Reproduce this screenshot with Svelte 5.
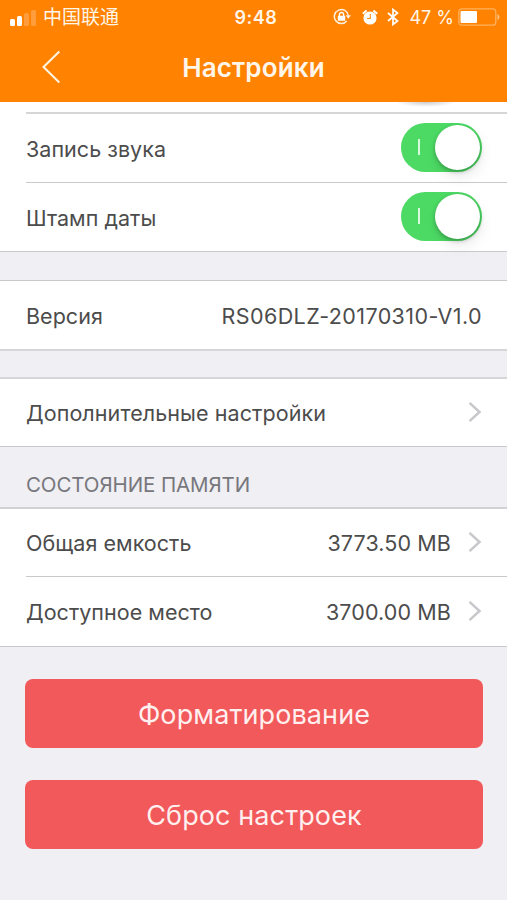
<script>
	let toggles = [
		{ id: 'sound', label: 'Запись звука', on: true },
		{ id: 'date', label: 'Штамп даты', on: true }
	];

	const memory = [
		{ label: 'Общая емкость', value: '3773.50 MB' },
		{ label: 'Доступное место', value: '3700.00 MB' }
	];

	const actions = ['Форматирование', 'Сброс настроек'];
	const bars = [7, 10, 13, 16];
</script>

{#snippet chevron()}
	<svg class="chevron" width="14" height="22" viewBox="0 0 14 22">
		<path d="M1.5 1.8 11.5 11 1.5 20.2" fill="none" stroke="#c7c7cc" stroke-width="2.5" />
	</svg>
{/snippet}

<div class="screen">
	<header>
		<div class="status">
			<div class="carrier">
				<div class="signal">
					{#each bars as height, i}
						<span class:weak={i > 1} style="height: {height}px"></span>
					{/each}
				</div>
				<span class="operator">中国联通</span>
			</div>
			<time>9:48</time>
			<div class="indicators">
				<svg class="lock" width="18" height="18" viewBox="0 0 18 18">
					<path d="M13.8 13A7 7 0 1 1 15.3 7.5" fill="none" stroke="#ffefdc" stroke-width="1.5" />
					<path d="M12.600 7.300h5.400l-2.700 3.500z" fill="#ffefdc" />
					<rect x="4.800" y="7.800" width="7.400" height="5" rx=".6" fill="#fff" />
					<path d="M6.400 8V6.600a2.100 2.100 0 0 1 4.200 0V8" fill="none" stroke="#fff" stroke-width="1.400" />
				</svg>
				<svg class="alarm" width="16" height="17" viewBox="0 0 16 17">
					<circle cx="8" cy="9" r="6.600" fill="#fff" />
					<path d="M8.300 5v4.500H5" fill="none" stroke="#ff8f1c" stroke-width="1.100" />
					<path d="M.8 4.700 4.600 1.400M15.200 4.700 11.400 1.400" stroke="#fff" stroke-width="2" />
				</svg>
				<svg class="bluetooth" width="12" height="18" viewBox="0 0 12 18">
					<path d="m1 5 9.500 8L6 16.500V1.500L10.500 5 1 13" fill="none" stroke="#fff" stroke-width="1.700" />
				</svg>
				<span class="percent">47 %</span>
				<svg class="battery" width="42" height="18" viewBox="0 0 42 18">
					<rect x=".8" y=".8" width="37" height="16.400" rx="3" fill="none" stroke="#ffb15f" stroke-width="1.300" />
					<rect x="2.500" y="3" width="16.500" height="12" rx="1" fill="#fff" />
					<path d="M39.500 6c2.500 1 2.500 5 0 6z" fill="#ffc488" />
				</svg>
			</div>
		</div>
		<nav>
			<svg width="20" height="34" viewBox="0 0 20 34">
				<path d="M18.300 1.500 2.500 17l15.800 15.500" fill="none" stroke="#fff3e2" stroke-width="2.100" />
			</svg>
			<h1>Настройки</h1>
		</nav>
	</header>

	<main>
		<section class="switches">
			<div class="cut"><i></i></div>
			{#each toggles as toggle (toggle.id)}
				<label class="row">
					<span>{toggle.label}</span>
					<input type="checkbox" bind:checked={toggle.on} />
					<b class="switch"></b>
				</label>
			{/each}
		</section>

		<section class="version">
			<div class="row">
				<span>Версия</span>
				<span class="value code">RS06DLZ-20170310-V1.0</span>
			</div>
		</section>

		<section class="more">
			<div class="row">
				<span class="long">Дополнительные настройки</span>
				{@render chevron()}
			</div>
		</section>

		<h2>СОСТОЯНИЕ ПАМЯТИ</h2>
		<section class="memory">
			{#each memory as item}
				<div class="row">
					<span>{item.label}</span>
					<span class="value">{item.value}</span>
					{@render chevron()}
				</div>
			{/each}
		</section>

		<div class="actions">
			{#each actions as action}
				<button type="button">{action}</button>
			{/each}
		</div>
	</main>
</div>

<style>
	:global(body) {
		margin: 0;
		background: #efeff4;
	}
	.screen {
		width: 507px;
		height: 900px;
		overflow: hidden;
		background: #efeff4;
		color: #4c4c4c;
		font-family: Inter, 'Noto Sans CJK SC', sans-serif;
		font-size: 21.5px;
		font-weight: 400;
	}
	header {
		height: 102px;
		background: #ff8200;
		color: #fff6ea;
	}
	.status {
		display: grid;
		grid-template-columns: 1fr auto 1fr;
		align-items: center;
		height: 34px;
		padding: 0 7px 0 10px;
	}
	.carrier,
	.indicators {
		display: flex;
		align-items: center;
	}
	.indicators {
		justify-content: flex-end;
	}
	.signal {
		display: flex;
		align-items: flex-end;
		gap: 2px;
		height: 17px;
		margin-right: 7px;
	}
	.signal span {
		width: 5px;
		border-radius: 1.5px;
		background: #fff;
	}
	.signal .weak {
		background: #ff9d3c;
	}
	.operator {
		font-size: 19px;
		line-height: 34px;
		padding-top: 2px;
	}
	.carrier {
		height: 34px;
	}
	time {
		padding-left: 2px;
		font-size: 18px;
		font-weight: 600;
		letter-spacing: 0.5px;
	}
	.alarm {
		margin-left: 11px;
	}
	.bluetooth {
		margin-left: 9px;
	}
	.percent {
		margin-left: 10px;
		font-size: 18px;
		white-space: nowrap;
	}
	.battery {
		margin-left: 4px;
	}
	nav {
		display: grid;
		grid-template-columns: 80px 1fr 80px;
		align-items: center;
		height: 66px;
	}
	nav svg {
		margin-left: 41px;
	}
	h1 {
		margin: 0;
		text-align: center;
		font-size: 26px;
		font-weight: 600;
		letter-spacing: 0.15px;
	}
	section {
		background: #fff;
		border-bottom: 1px solid #c9c9cd;
	}
	.cut {
		display: flex;
		justify-content: flex-end;
		height: 10px;
		margin-left: 26px;
		padding-right: 48px;
		border-bottom: 2px solid #d6d6d8;
		overflow: hidden;
	}
	/* shadow left by the switch that has scrolled under the header */
	.cut i {
		width: 66px;
		height: 10px;
		background: radial-gradient(ellipse 30px 5px at 50% 0, #cbcbcb, #fff);
	}
	.row {
		display: flex;
		align-items: center;
		height: 68px;
		margin-left: 26px;
		padding-right: 25px;
		letter-spacing: 0.03px;
	}
	.row > span {
		padding-top: 1px;
		white-space: nowrap;
	}
	.row + .row {
		border-top: 1px solid #c9c9cd;
	}
	.value {
		margin-left: auto;
		letter-spacing: 0.1px;
	}
	.code {
		letter-spacing: 0.4px;
	}
	.long {
		letter-spacing: 0.08px;
	}
	.chevron {
		margin: 0 0 2px auto;
	}
	.value + .chevron {
		margin-left: 17px;
	}
	input {
		display: none;
	}
	.switch {
		box-sizing: border-box;
		display: flex;
		align-items: center;
		justify-content: space-between;
		width: 81px;
		height: 49px;
		margin: 0 0 2px auto;
		padding: 0 2px 0 17px;
		border-radius: 25px;
		background: #4cd964;
	}
	.switch::before {
		content: '';
		width: 2px;
		height: 16px;
		background: #d8fadd;
	}
	.switch::after {
		content: '';
		width: 45px;
		height: 45px;
		border-radius: 50%;
		background: #fff;
		box-shadow: 0 2px 4px rgba(0, 0, 0, 0.25), 2px 7px 14px rgba(0, 0, 0, 0.08);
	}
	input:not(:checked) + .switch {
		flex-direction: row-reverse;
		padding: 0 17px 0 2px;
		background: #ddd;
	}
	.version {
		margin-top: 28px;
		border-top: 1px solid #c9c9cd;
		border-bottom: 2px solid #d6d6d8;
	}
	.more {
		margin-top: 26px;
		border-top: 2px solid #d6d6d8;
	}
	.more .row {
		height: 67px;
	}
	h2 {
		height: 60px;
		margin: 0 0 0 26px;
		line-height: 75px;
		font-size: 20.5px;
		font-weight: 400;
		letter-spacing: -0.1px;
		color: #77777c;
	}
	.memory {
		border-top: 2px solid #d2d2d5;
	}
	.memory .row {
		height: 67px;
	}
	.memory .row + .row {
		height: 69px;
	}
	.actions {
		display: flex;
		flex-direction: column;
		gap: 32px;
		padding: 32px 24px 0 25px;
	}
	button {
		height: 69px;
		padding: 2px 0 0;
		border: 0;
		border-radius: 8px;
		background: #f2595b;
		color: #fff0ef;
		font: inherit;
		font-size: 27px;
		letter-spacing: 0.1px;
	}
</style>
